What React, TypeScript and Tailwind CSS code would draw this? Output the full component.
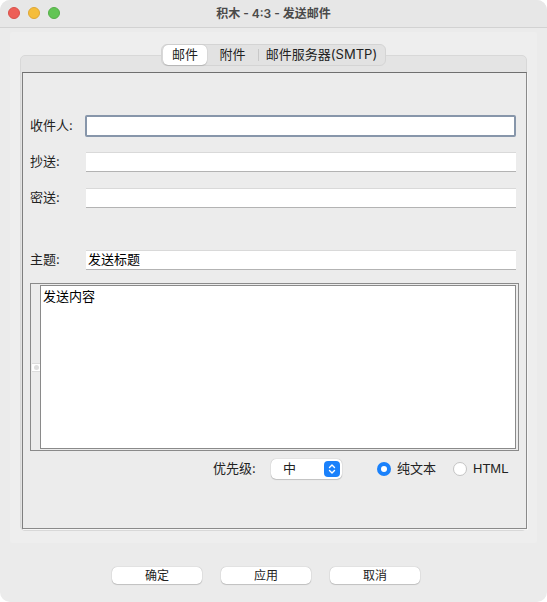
import { useState } from 'react';

const font = "font-['Inter','Noto_Sans_CJK_SC',sans-serif]";

const TextRow = ({ label, value, focused }: { label: string; value?: string; focused?: boolean }) => (
  <div className="flex items-center h-[20px]">
    <div className="w-[56px] text-[13px] text-[#222]">{label}</div>
    {focused ? (
      <div className="w-[431px] h-[22px] -my-[1px] -ml-[1px] border-2 border-[#8796aa] rounded-[2px] bg-white" />
    ) : (
      <div className="w-[430px] h-[20px] bg-white border-t border-[#d9d9d9] border-b border-b-[#b3b3b3] flex items-center px-[2px] text-[13px] text-black">
        {value}
      </div>
    )}
  </div>
);

const Radio = ({ on }: { on: boolean }) =>
  on ? (
    <div className="w-[14px] h-[14px] rounded-full bg-[#1a81fb] flex items-center justify-center">
      <div className="w-[6px] h-[6px] rounded-full bg-white" />
    </div>
  ) : (
    <div className="w-[14px] h-[14px] rounded-full bg-white border border-[#c4c4c4]" />
  );

const App = () => {
  const [tab, setTab] = useState(0);
  const [format, setFormat] = useState<'text' | 'html'>('text');
  const tabs = [
    { name: '邮件', w: 'w-[44px]' },
    { name: '附件', w: 'w-[51px]' },
    { name: '邮件服务器(SMTP)', w: 'w-[125px]' },
  ];

  return (
    <div className={`w-[547px] h-[602px] bg-white ${font}`}>
      <div className="w-full h-full rounded-[10px] overflow-hidden bg-[#ebebeb] flex flex-col">
        {/* Title bar */}
        <div className="h-[28px] shrink-0 bg-[#e7e7e7] border-b border-[#d2d2d2] relative flex items-center justify-center">
          <div className="absolute left-[8px] top-[7px] flex gap-[8px]">
            <div className="w-[12px] h-[12px] rounded-full bg-[#ed5f57] border border-[#d8514a]" />
            <div className="w-[12px] h-[12px] rounded-full bg-[#f5bd3b] border border-[#dea634]" />
            <div className="w-[12px] h-[12px] rounded-full bg-[#62c554] border border-[#55ad48]" />
          </div>
          <div className="text-[12px] font-semibold text-[#4a4a4a]">积木 - 4:3 - 发送邮件</div>
        </div>

        {/* Body */}
        <div className="px-[10px] pt-[4px]">
          <div className="h-[511px] bg-[#eeeeee] rounded-[2px] px-[10px] pt-[12px] flex flex-col">
            {/* Segmented tabs */}
            <div className="relative z-10 self-center flex items-center h-[22px] bg-[#e2e2e2] border border-[#d4d4d4] rounded-[6px] px-[1px] text-[13px] text-[#222] whitespace-nowrap">
              {tabs.map((t, i) => (
                <div key={t.name} className="flex items-center h-full">
                  {i === 2 && tab === 0 && <div className="w-px h-[12px] bg-[#c8c8c8]" />}
                  <button
                    onClick={() => setTab(i)}
                    className={`h-[20px] rounded-[5px] ${t.w} ${
                      tab === i ? 'bg-white shadow-[0_0_1px_rgba(0,0,0,0.3),0_1px_1px_rgba(0,0,0,0.12)]' : ''
                    }`}
                  >
                    {t.name}
                  </button>
                </div>
              ))}
            </div>

            {/* Tab pane */}
            <div className="-mt-[11px] h-[476px] bg-[#e4e4e4] border border-[#d8d8d8] rounded-[5px] px-[1px] pt-[16px] pb-[1px] flex">
              <div className="flex-1 bg-[#ececec] border border-[#8a8a8a] border-t-[#6f6f6f] border-l-[#7f7f7f] shadow-[1px_1px_0_#f6f6f6] pl-[7px] pr-[7px] pt-[43px] flex flex-col">
                <TextRow label="收件人:" focused />
                <div className="h-[16px]" />
                <TextRow label="抄送:" />
                <div className="h-[16px]" />
                <TextRow label="密送:" />
                <div className="h-[42px]" />
                <TextRow label="主题:" value="发送标题" />

                {/* Content area */}
                <div className="mt-[13px] w-[489px] h-[168px] border border-[#8a8a8a] flex pt-[1px] pr-[2px] pb-[1px]">
                  <div className="w-[9px] flex flex-col">
                    <div className="mt-[78px] ml-[1px] w-[8px] h-[9px] bg-white border-y border-[#dcdcdc] flex items-center justify-center">
                      <div className="w-[5px] h-[5px] rounded-full bg-[#dedede]" />
                    </div>
                  </div>
                  <div className="flex-1 bg-white border border-[#8a8a8a] px-[2px] pt-[1px] text-[13px] text-black leading-[18px]">
                    发送内容
                  </div>
                </div>

                {/* Priority row */}
                <div className="mt-[8px] h-[20px] flex items-center text-[13px] text-[#222]">
                  <div className="ml-[183px] w-[58px]">优先级:</div>
                  <div className="w-[71px] h-[20px] bg-white rounded-[5px] shadow-[0_0_1px_rgba(0,0,0,0.35),0_1px_1px_rgba(0,0,0,0.15)] flex items-center justify-between pl-[12px] pr-[2px]">
                    <span>中</span>
                    <div className="w-[16px] h-[16px] rounded-[4px] bg-[#1a81fb] flex items-center justify-center">
                      <svg width="8" height="12" viewBox="0 0 8 12" fill="none" stroke="white" strokeWidth="1.4" strokeLinecap="round" strokeLinejoin="round">
                        <path d="M1.5 4.5 L4 2 L6.5 4.5" />
                        <path d="M1.5 7.5 L4 10 L6.5 7.5" />
                      </svg>
                    </div>
                  </div>
                  <button onClick={() => setFormat('text')} className="ml-[35px] flex items-center">
                    <Radio on={format === 'text'} />
                    <span className="ml-[6px]">纯文本</span>
                  </button>
                  <button onClick={() => setFormat('html')} className="ml-[17px] flex items-center">
                    <Radio on={format === 'html'} />
                    <span className="ml-[6px] font-['Liberation_Sans',sans-serif]">HTML</span>
                  </button>
                </div>
              </div>
            </div>
          </div>
        </div>

        {/* Buttons */}
        <div className="mt-[24px] flex justify-center gap-[19px] pr-[15px]">
          {['确定', '应用', '取消'].map((b) => (
            <button
              key={b}
              className="w-[90px] h-[17px] bg-white rounded-[5px] text-[12px] leading-[17px] text-[#222] shadow-[0_0_1px_rgba(0,0,0,0.35),0_1px_1px_rgba(0,0,0,0.15)]"
            >
              {b}
            </button>
          ))}
        </div>
      </div>
    </div>
  );
};

export default App;
